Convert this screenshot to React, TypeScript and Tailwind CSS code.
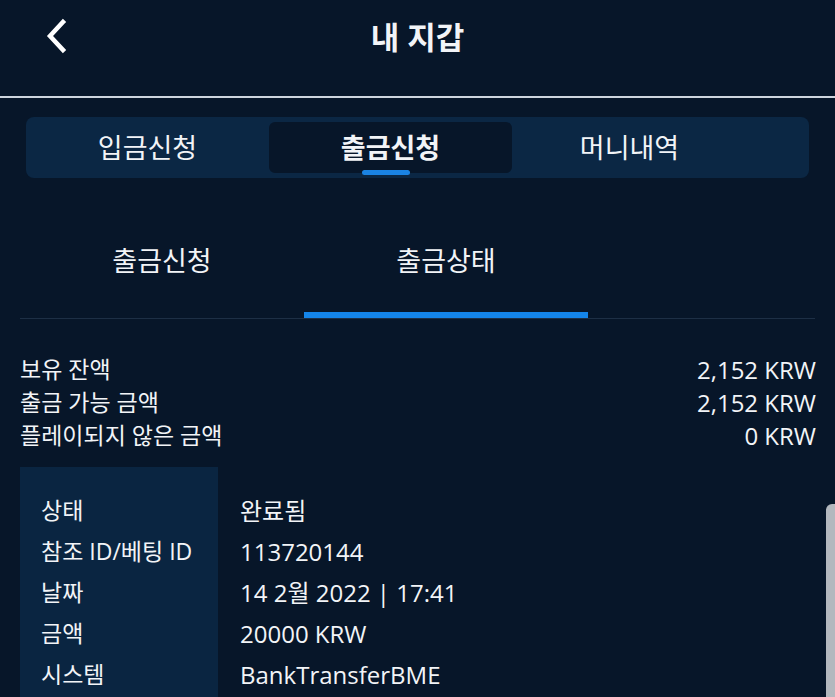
import React from "react";

const font = { fontFamily: '"Open Sans", "Noto Sans CJK KR", "Noto Sans", sans-serif' };

export default function App() {
  const rows: [string, string][] = [
    ["상태", "완료됨"],
    ["참조 ID/베팅 ID", "113720144"],
    ["날짜", "14 2월 2022 | 17:41"],
    ["금액", "20000 KRW"],
    ["시스템", "BankTransferBME"],
  ];
  const balances: [string, string][] = [
    ["보유 잔액", "2,152 KRW"],
    ["출금 가능 금액", "2,152 KRW"],
    ["플레이되지 않은 금액", "0 KRW"],
  ];
  return (
    <div
      className="relative w-[835px] h-[697px] overflow-hidden bg-[#071629] text-[#f2f4f7]"
      style={font}
    >
      {/* header */}
      <div className="relative h-[96px] flex items-center justify-center">
        <svg
          className="absolute left-[42px] top-[18px]"
          width="28"
          height="36"
          viewBox="0 0 28 36"
          fill="none"
        >
          <path d="M21 4 L8 18 L21 32" stroke="#ffffff" strokeWidth="4.5" strokeLinecap="square" strokeLinejoin="miter" />
        </svg>
        <div className="text-[31px] font-bold leading-none -mt-[22px]">내 지갑</div>
      </div>
      <div className="h-[2px] bg-[#cdd4dd]" />

      {/* main tabs */}
      <div className="mx-[26px] mt-[19px] h-[61px] rounded-lg bg-[#0b2744] flex items-center">
        <div className="w-[243px] h-[51px] flex items-center justify-center text-[27px] leading-none">
          입금신청
        </div>
        <div className="relative w-[243px] h-[51px] rounded-md bg-[#071629] flex items-center justify-center text-[27px] font-bold leading-none">
          출금신청
          <div className="absolute left-[93px] bottom-[-2px] w-[48px] h-[5px] rounded-full bg-[#1a83e3]" />
        </div>
        <div className="w-[235px] h-[51px] flex items-center justify-center text-[27px] leading-none">
          머니내역
        </div>
      </div>

      {/* sub tabs */}
      <div className="mx-[20px] mt-[24px] flex border-b border-[#1d2f45]">
        <div className="w-[284px] h-[116px] flex items-center justify-center text-[27px] leading-none">
          출금신청
        </div>
        <div className="relative w-[284px] h-[116px] flex items-center justify-center text-[27px] leading-none">
          출금상태
          <div className="absolute left-0 right-0 bottom-0 h-[6px] bg-[#1485ea]" />
        </div>
      </div>

      {/* balances */}
      <div className="pt-[34px] pl-[20px] pr-[19px] text-[23px]">
        {balances.map(([k, v]) => (
          <div key={k} className="h-[33px] flex items-center justify-between leading-none">
            <span>{k}</span>
            <span className="text-[24px]">{v}</span>
          </div>
        ))}
      </div>

      {/* details table */}
      <div className="mt-[15px] ml-[20px] flex text-[23px]">
        <div className="w-[198px] bg-[#0a2541] pt-[23px] pb-[10px]">
          {rows.map(([k]) => (
            <div key={k} className="h-[41px] flex items-center pl-[21px] leading-none">
              {k}
            </div>
          ))}
        </div>
        <div className="pt-[23px] pl-[22px] text-[24px]">
          {rows.map(([k, v]) => (
            <div key={k} className="h-[41px] flex items-center leading-none">
              {v}
            </div>
          ))}
        </div>
      </div>

      {/* scrollbar */}
      <div className="absolute left-[826px] top-[504px] w-[10px] h-[200px] rounded-tl-[6px] bg-[#b3b8be]" />
    </div>
  );
}
